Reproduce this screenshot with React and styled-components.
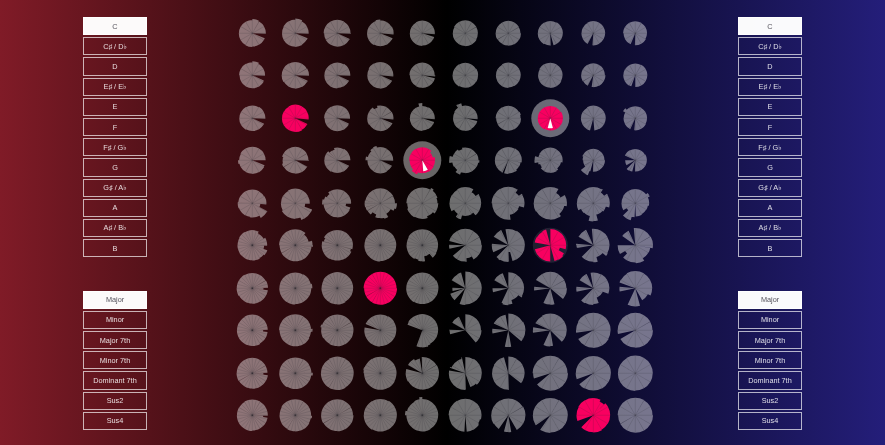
import styled, { createGlobalStyle } from "styled-components";

const GlobalStyle = createGlobalStyle`
  html, body { margin: 0; height: 100%; background: #000; }
`;

const Page = styled.div`
  width: 885px;
  height: 445px;
  overflow: hidden;
  display: flex;
  padding-left: 83px;
  box-sizing: border-box;
  background: linear-gradient(to right, #801b27 0%, #000 50.5%, #241e7a 100%);
  font-family: "Liberation Sans", Arial, sans-serif;
`;
const Side = styled.div`
  width: 64px;
  height: 413px;
  margin-top: 17px;
  flex: none;
  display: flex;
  flex-direction: column;
  justify-content: space-between;
`;
const Group = styled.div`
  display: flex;
  flex-direction: column;
  gap: 2px;
`;
const Btn = styled.div`
  height: 18.2px;
  box-sizing: border-box;
  display: flex;
  align-items: center;
  justify-content: center;
  font-size: 7.3px;
  font-family: "Liberation Sans", "DejaVu Sans", sans-serif;
  border: 1px solid ${(p) => (p.$on ? "rgba(255,255,255,.98)" : "rgba(255,255,255,.68)")};
  background: ${(p) => (p.$on ? "rgba(255,255,255,.98)" : "transparent")};
  color: ${(p) => (p.$on ? "#55525c" : "rgba(255,255,255,.85)")};
  will-change: opacity;
`;
const Board = styled.div`
  flex: none;
  width: 426px;
  margin: 11.9px 81px 0 84px;
  display: grid;
  grid-template-columns: repeat(10, 42.6px);
  grid-auto-rows: 42.5px;
`;
const Dial = styled.svg`
  width: 42.6px;
  height: 42.5px;
  display: block;
  overflow: visible;
  filter: blur(0.3px);
`;
const Ring = styled.circle`
  fill: #fff;
  fill-opacity: ${(p) => p.$o};
`;
const Sectors = styled.path`
  fill: ${(p) => (p.$hot ? "#f80060" : "#fff")};
  fill-opacity: ${(p) => (p.$hot ? 1 : 0.43)};
`;
const Spokes = styled.path`
  fill: none;
  stroke: #2a2630;
  stroke-opacity: 0.3;
  stroke-width: 0.5;
`;
const Tip = styled.path`
  fill: #fff;
`;

const notes = ["C", "C♯ / D♭", "D", "E♯ / E♭", "E", "F", "F♯ / G♭", "G", "G♯ / A♭", "A", "A♯ / B♭", "B"];
const kinds = ["Major", "Minor", "Major 7th", "Minor 7th", "Dominant 7th", "Sus2", "Sus4"];

// [radius, ...[from deg, to deg, radius]] clockwise from 12 o'clock
const dials = [
  [
    [13.5, [92, 112, 0], [0, 28, 14.5]], [13.5, [92, 112, 0], [0, 28, 14.5]], [13.5, [92, 115, 0]], [13.2, [95, 112, 0], [340, 360, 14]], [12.6, [95, 108, 0]],
    [12.8], [12.5], [12.5, [165, 178, 0]], [12, [184, 208, 0]], [12, [182, 203, 0]],
  ],
  [
    [13, [92, 115, 0], [0, 28, 14]], [13.5, [92, 114, 0]], [13, [92, 115, 0]], [13.2, [95, 115, 0]], [12.7, [95, 103, 0]],
    [12.7], [12.5], [12.5], [12, [188, 208, 0]], [12, [180, 200, 0]],
  ],
  [
    [13, [92, 115, 0]], [13.5, [95, 115, 0]], [13, [92, 115, 0]], [13, [95, 112, 0], [325, 345, 11]], [12.5, [95, 108, 0], [345, 360, 15.5]],
    [12.5, [325, 345, 15.5], [95, 103, 0]], [12.5, [60, 75, 13.2]], [12.5], [12.5, [175, 195, 0]], [12, [185, 205, 0], [300, 315, 14]],
  ],
  [
    [13.5, [90, 112, 0], [255, 270, 14.5]], [13.5, [92, 118, 0], [255, 285, 12.5]], [13, [90, 115, 0], [315, 345, 11]], [13, [92, 115, 0], [270, 285, 15], [315, 345, 14.5]], [13, [200, 225, 15], [45, 75, 11]],
    [13, [200, 220, 15.5], [260, 285, 16], [90, 100, 14], [325, 345, 11.5]], [13.5, [198, 205, 0], [100, 140, 12.5]], [12.5, [260, 285, 16], [230, 250, 11], [100, 140, 11]], [11.5, [182, 195, 0], [200, 232, 16], [232, 290, 10.5]], [11.5, [182, 195, 0], [195, 225, 12], [225, 240, 0], [240, 270, 10], [270, 295, 0]],
  ],
  [
    [14, [95, 118, 8], [118, 150, 17], [150, 190, 14.5], [250, 275, 14.5]], [14.5, [92, 110, 10], [110, 160, 18], [160, 240, 15.5]], [14, [92, 108, 9], [265, 285, 15.5], [300, 320, 12]], [15, [90, 110, 16.5], [120, 150, 12], [150, 165, 16], [200, 220, 12], [255, 280, 15.5]], [16, [30, 40, 17.5], [70, 90, 15], [130, 160, 14], [250, 270, 15]],
    [16, [30, 55, 12.5], [140, 195, 12.5], [195, 215, 16.5], [215, 240, 13]], [16.5, [35, 55, 13], [105, 172, 11.5]], [16.5, [30, 60, 12], [100, 140, 14]], [16.5, [35, 55, 13], [105, 130, 13], [130, 165, 12], [165, 195, 18], [195, 225, 13], [225, 245, 13.5]], [14, [50, 65, 16], [100, 178, 13], [178, 183, 0], [195, 225, 17.5], [225, 240, 10]],
  ],
  [
    [15, [25, 60, 13], [92, 108, 12], [108, 130, 16]], [16, [40, 75, 14], [75, 95, 17.5]], [15.5, [285, 300, 14], [105, 115, 14]], [16], [16, [140, 170, 11], [195, 210, 15]],
    [16.5, [150, 175, 13], [230, 258, 0], [258, 272, 16], [272, 285, 0]], [16.5, [165, 178, 7], [180, 215, 17], [225, 245, 0], [275, 300, 0], [300, 335, 17], [335, 350, 0]], [16, [255, 280, 0], [345, 360, 0], [105, 120, 10], [165, 180, 0], [130, 150, 17]], [16.5, [130, 165, 12], [165, 180, 17], [225, 260, 0], [262, 275, 17], [275, 300, 0], [300, 335, 17], [335, 355, 0]], [17.5, [100, 150, 15], [150, 178, 18], [225, 240, 12], [270, 305, 0], [305, 335, 16], [335, 355, 0]],
  ],
  [
    [15.5, [88, 97, 11]], [16, [75, 90, 17]], [16], [16.5], [16],
    [16.5, [200, 222, 0], [222, 250, 16], [250, 258, 0], [258, 272, 13], [272, 300, 0], [300, 345, 16], [345, 360, 0]], [16, [125, 165, 12], [180, 200, 17], [205, 255, 0], [255, 270, 16], [270, 300, 0], [340, 360, 0]], [16.5, [130, 165, 0], [205, 262, 0], [262, 275, 16], [275, 300, 0]], [16, [110, 160, 10], [180, 225, 17], [225, 258, 0], [258, 275, 17], [275, 300, 0], [335, 350, 0]], [17, [115, 150, 14], [150, 165, 0], [165, 205, 18], [205, 258, 0], [258, 275, 16], [275, 290, 0]],
  ],
  [
    [15.5, [88, 97, 11]], [16, [85, 95, 17.5]], [16, [280, 290, 17]], [16, [280, 293, 0]], [16, [160, 200, 17], [200, 290, 0]],
    [16, [140, 255, 0], [255, 272, 16], [272, 300, 0], [300, 335, 15], [335, 360, 0]], [17, [130, 170, 0], [170, 192, 17], [192, 258, 0], [258, 275, 16], [275, 295, 0], [295, 350, 16], [350, 360, 0]], [16.5, [135, 170, 0], [170, 205, 16], [205, 262, 0], [262, 280, 17.5], [280, 295, 0]], [17.5, [240, 262, 0]], [17.5, [240, 258, 0]],
  ],
  [
    [15.5, [88, 97, 11]], [16, [88, 97, 17.5]], [16.5], [16.5, [280, 290, 17]], [16.5, [285, 300, 0], [330, 350, 15], [350, 358, 0]],
    [16.5, [135, 160, 15], [160, 178, 0], [280, 290, 0], [292, 345, 15], [348, 360, 0]], [16.5, [128, 178, 0], [345, 360, 0]], [17.5, [230, 252, 0]], [17.5, [232, 250, 0]], [17.5],
  ],
  [
    [15.5, [92, 99, 11]], [16, [92, 100, 17]], [16], [16.5], [16, [350, 360, 18], [270, 285, 17.5]],
    [16.5, [175, 183, 0], [205, 225, 16.5], [105, 125, 15.5]], [17, [150, 170, 0], [195, 215, 0]], [17.5, [215, 235, 0]], [17, [25, 45, 15], [225, 250, 0]], [17.5],
  ],
];

const hot = { "2-1": 0, "2-7": 0.4, "3-4": 0.4, "5-7": 0.1, "6-3": 0, "9-8": 0 };
const tips = { "2-7": [165, 195, 10], "3-4": [150, 175, 11] };

const xy = (r, deg) => {
  const a = (deg * Math.PI) / 180;
  return `${(r * Math.sin(a)).toFixed(2)} ${(-r * Math.cos(a)).toFixed(2)}`;
};

const sector = (from, to, r) =>
  `M0 0L${xy(r, from)}A${r} ${r} 0 0 1 ${xy(r, to)}Z`;

// small per-wedge wobble so the edges are as uneven as the drawing
const wobble = (i, j, k) => (((i * 7 + j * 13 + k * 5) * 37) % 11) / 11 - 0.5;

function radiusAt(dial, deg) {
  const [base, ...over] = dial;
  let r = base;
  over.forEach(([from, to, v]) => {
    if (deg >= from && deg < to) r = v;
  });
  return r;
}

function buildDial(dial, i, j) {
  const step = i >= 5 && j < 5 ? 15 : 30;
  const cuts = new Set();
  for (let d = 0; d < 360; d += step) cuts.add(d);
  dial.slice(1).forEach(([from, to]) => {
    cuts.add(from);
    cuts.add(to % 360);
  });
  const list = [...cuts].sort((a, b) => a - b);
  let fill = "";
  let lines = "";
  list.forEach((from, n) => {
    const to = list[n + 1] ?? 360;
    const r = radiusAt(dial, (from + to) / 2);
    if (!r) return;
    const k = Math.floor(from / 30);
    const size = r + wobble(i, j, k) * 0.6;
    fill += sector(from, to, size);
    if (from % step === 0) lines += `M0 0L${xy(size, from)}`;
  });
  return { fill, lines };
}

function ChordDial({ dial, i, j }) {
  const key = `${i}-${j}`;
  const { fill, lines } = buildDial(dial, i, j);
  const tip = tips[key];
  const isHot = key in hot;
  return (
    <Dial viewBox="-21.3 -21.25 42.6 42.5">
      {hot[key] > 0 && <Ring r={hot[key] === 0.1 ? 17.5 : 19} $o={hot[key]} />}
      <Sectors d={fill} $hot={isHot} />
      <Spokes d={lines} />
      {tip && <Tip d={sector(tip[0], tip[1], tip[2])} />}
    </Dial>
  );
}

function Panel() {
  return (
    <Side>
      <Group>
        {notes.map((n, i) => (
          <Btn key={n} $on={i === 0}>{n}</Btn>
        ))}
      </Group>
      <Group>
        {kinds.map((n, i) => (
          <Btn key={n} $on={i === 0}>{n}</Btn>
        ))}
      </Group>
    </Side>
  );
}

export default function App() {
  return (
    <>
      <GlobalStyle />
      <Page>
        <Panel />
        <Board>
          {dials.map((row, i) =>
            row.map((dial, j) => <ChordDial key={`${i}-${j}`} dial={dial} i={i} j={j} />)
          )}
        </Board>
        <Panel />
      </Page>
    </>
  );
}
